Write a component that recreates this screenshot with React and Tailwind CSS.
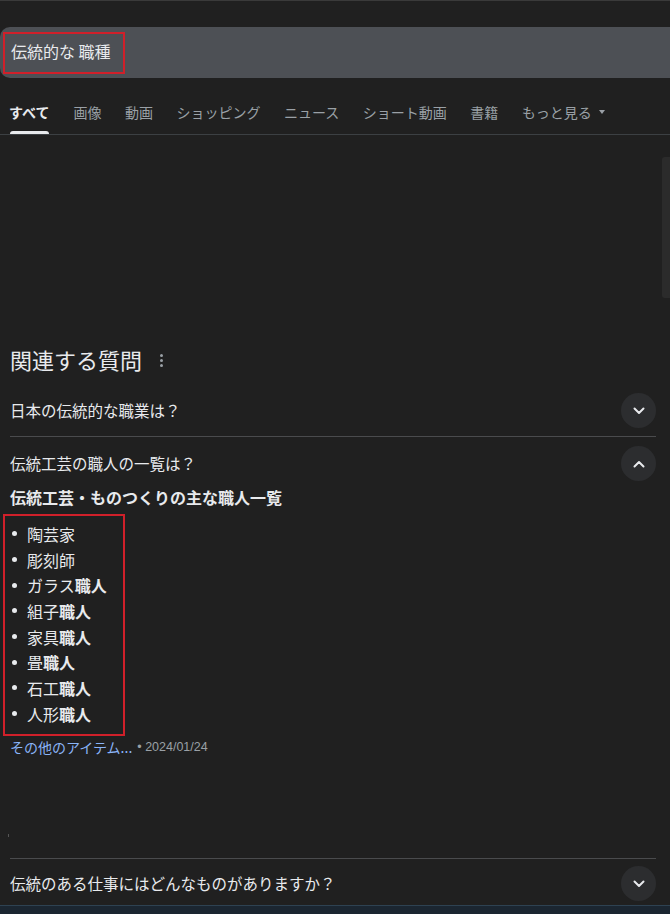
import React from "react";

const font = { fontFamily: '"Noto Sans CJK JP", "Noto Sans", Arial, sans-serif' };

const tabs = ["画像", "動画", "ショッピング", "ニュース", "ショート動画", "書籍"];

const items = [
  ["陶芸家", ""],
  ["彫刻師", ""],
  ["ガラス", "職人"],
  ["組子", "職人"],
  ["家具", "職人"],
  ["畳", "職人"],
  ["石工", "職人"],
  ["人形", "職人"],
];

const Chevron = ({ up }) => (
  <div className="w-[35px] h-[35px] rounded-full bg-[#2c2d2f] flex items-center justify-center shrink-0">
    <svg width="12" height="8" viewBox="0 0 12 8" fill="none">
      <path
        d={up ? "M1.5 6.5 L6 2 L10.5 6.5" : "M1.5 1.5 L6 6 L10.5 1.5"}
        stroke="#e8eaed"
        strokeWidth="2"
        strokeLinecap="round"
        strokeLinejoin="round"
      />
    </svg>
  </div>
);

const Question = ({ text, up, className = "h-[51px]" }) => (
  <div className={"flex items-center justify-between pr-[14px] " + className}>
    <span className="text-[15.5px] text-[#e8eaed]">{text}</span>
    <Chevron up={up} />
  </div>
);

const App = () => {
  return (
    <div className="w-[670px] h-[914px] bg-[#202020] overflow-hidden flex flex-col border-t border-[#3a3a3a]" style={font}>
      {/* search bar */}
      <div className="mt-[26px] h-[51px] shrink-0 bg-[#4d5055] rounded-l-[10px] flex items-center pl-[3px]">
        <div className="h-[42px] w-[122px] border-2 border-[#d0202a] flex items-center pl-[6px] pb-[3px]">
          <span className="text-[16px] text-[#e8eaed]">伝統的な 職種</span>
        </div>
      </div>

      {/* tabs */}
      <div className="flex items-end h-[57px] shrink-0 border-b border-[#3c4043] pl-[9px]">
        <div className="flex flex-col items-center mr-[24px]">
          <span className="text-[14px] font-bold text-[#e8eaed] leading-none mb-[12px]">すべて</span>
          <div className="h-[3px] w-[39px] bg-[#e8eaed] rounded-t-sm"></div>
        </div>
        {tabs.map((t) => (
          <span key={t} className="text-[14px] text-[#9aa0a6] leading-none mb-[15px] mr-[23.5px]">
            {t}
          </span>
        ))}
        <span className="text-[14px] text-[#9aa0a6] leading-none mb-[15px] flex items-center gap-[7px]">
          もっと見る
          <svg width="6" height="4" viewBox="0 0 6 4">
            <path d="M0 0 L6 0 L3 4 Z" fill="#9aa0a6" />
          </svg>
        </span>
      </div>

      {/* blank area with scroll thumb */}
      <div className="flex justify-end h-[207px] shrink-0">
        <div className="mt-[22px] w-[8px] h-[141px] bg-[#2b2b2b] rounded-l-[3px]"></div>
      </div>

      {/* related questions */}
      <div className="pl-[10px] shrink-0">
        <div className="flex items-center gap-[18px] h-[34px]">
          <span className="text-[22px] text-[#e8eaed]">関連する質問</span>
          <div className="flex flex-col gap-[2px] mt-[3px]">
            <span className="w-[3px] h-[3px] rounded-full bg-[#9aa0a6]"></span>
            <span className="w-[3px] h-[3px] rounded-full bg-[#9aa0a6]"></span>
            <span className="w-[3px] h-[3px] rounded-full bg-[#9aa0a6]"></span>
          </div>
        </div>

        <div className="mt-[9px] border-b border-[#4a4b4d] mr-[14px]">
          <div className="-mr-[14px]">
            <Question text="日本の伝統的な職業は？" />
          </div>
        </div>

        <div className="pt-[1px]">
          <Question text="伝統工芸の職人の一覧は？" up />
        </div>

        <div className="-mt-[4px]">
          <div className="text-[16px] font-bold text-[#e8eaed] h-[24px] flex items-center">
            伝統工芸・ものつくりの主な職人一覧
          </div>
          <div className="-ml-[7px] mt-[5px] w-[122px] h-[222px] border-2 border-[#d0202a] pt-[5px]">
            <ul className="flex flex-col">
              {items.map(([a, b]) => (
                <li key={a + b} className="flex items-center h-[25.7px] text-[16px] text-[#e8eaed]">
                  <span className="w-[5px] h-[5px] rounded-full bg-[#e8eaed] ml-[7px] mr-[10px]"></span>
                  <span>
                    {a}
                    {b && <b className="font-bold">{b}</b>}
                  </span>
                </li>
              ))}
            </ul>
          </div>
          <div className="flex items-center h-[22px]">
            <span className="text-[14px] text-[#8ab4f8]">その他のアイテム...</span>
            <span className="text-[12.5px] text-[#9aa0a6] ml-[5px]" style={{ fontFamily: '"Liberation Sans", Arial, sans-serif' }}>
              • 2024/01/24
            </span>
          </div>
        </div>

        <div className="h-[100px] flex items-end pb-[21px]">
          <div className="w-[1px] h-[3px] bg-[#555] -ml-[2px]"></div>
        </div>

        <div className="border-t border-[#4a4b4d] mr-[14px]">
          <div className="-mr-[14px]">
            <Question text="伝統のある仕事にはどんなものがありますか？" className="h-[46px] items-start pt-[7px] [&>span]:mt-[6px]" />
          </div>
        </div>
      </div>

      <div className="flex-1 bg-[#1b2631] border-t border-[#2e4252]"></div>
    </div>
  );
};

export default App;
